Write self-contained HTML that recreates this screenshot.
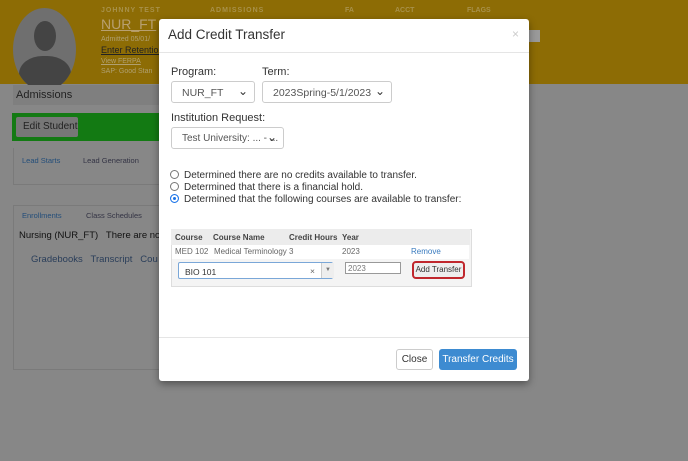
<html><head><style>
body{margin:0;width:688px;height:461px;background:#878787;font-family:"Liberation Sans",sans-serif;position:relative;overflow:hidden}
.a{position:absolute}
.hdr{left:0;top:0;width:688px;height:84px;background:#8d6c05}
.sel{position:absolute;border:1px solid #ccc;border-radius:3px;background:#fff;font-size:10.5px;color:#555;box-sizing:border-box;padding:5px 0 0 10px;white-space:nowrap;overflow:hidden}
.sel:after{content:"⌄";position:absolute;right:6px;top:2px;font-size:12px;color:#333}
.lbl{position:absolute;font-size:11px;color:#333}
.rad{position:absolute;font-size:10px;color:#333;left:170px}
.rad i{display:inline-block;width:7px;height:7px;border:1px solid #777;border-radius:50%;margin-right:5px;vertical-align:-1px}
</style></head><body>
<div class="a hdr"></div>
<div class="a" style="left:13px;top:8px;width:63px;height:83px;border-radius:50%;background:#6f6f6f;overflow:hidden">
<div style="position:absolute;left:21px;top:13px;width:22px;height:30px;border-radius:50%;background:#444"></div>
<div style="position:absolute;left:6px;top:48px;width:52px;height:40px;border-radius:45% 45% 0 0;background:#444"></div></div>
<div class="a" style="left:101px;top:7px;font-size:7px;color:#a8914a;font-weight:bold;letter-spacing:1px">JOHNNY TEST</div>
<div class="a" style="left:210px;top:7px;font-size:7px;color:#a8914a;font-weight:bold;letter-spacing:1px">ADMISSIONS</div>
<div class="a" style="left:345px;top:7px;font-size:7px;color:#a8914a;font-weight:bold">FA</div>
<div class="a" style="left:395px;top:7px;font-size:7px;color:#a8914a;font-weight:bold">ACCT</div>
<div class="a" style="left:467px;top:7px;font-size:7px;color:#a8914a;font-weight:bold">FLAGS</div>
<div class="a" style="left:101px;top:16px;font-size:14px;color:#b8a070;text-decoration:underline">NUR_FT</div>
<div class="a" style="left:101px;top:36px;font-size:7px;color:#b0a070">Admitted 05/01/</div>
<div class="a" style="left:101px;top:45px;font-size:9px;color:#222;text-decoration:underline">Enter Retention</div>
<div class="a" style="left:101px;top:58px;font-size:7px;color:#b0a070;text-decoration:underline">View FERPA</div>
<div class="a" style="left:101px;top:68px;font-size:7px;color:#b0a070">SAP: Good Stan</div>
<div class="a" style="left:528px;top:30px;width:12px;height:12px;background:#9a9a9a"></div>
<div class="a" style="left:13px;top:85px;width:146px;height:20px;background:#7f7f7f;font-size:11px;color:#222;padding:4px 0 0 3px;box-sizing:border-box">Admissions</div>
<div class="a" style="left:12px;top:113px;width:147px;height:28px;background:#137a13"></div>
<div class="a" style="left:16px;top:117px;width:62px;height:20px;background:#777;border-radius:2px;font-size:10px;color:#222;padding:4px 0 0 7px;box-sizing:border-box">Edit Student</div>
<div class="a" style="left:13px;top:148px;width:146px;height:36px;border:1px solid #7a7a7a;border-top:none"></div>
<div class="a" style="left:22px;top:156px;font-size:7.5px;color:#234e7a">Lead Starts</div>
<div class="a" style="left:83px;top:156px;font-size:7.5px;color:#334">Lead Generation</div>
<div class="a" style="left:13px;top:205px;width:146px;height:163px;border:1px solid #7a7a7a"></div>
<div class="a" style="left:22px;top:211px;font-size:7.5px;color:#234e7a">Enrollments</div>
<div class="a" style="left:86px;top:211px;font-size:7.5px;color:#334">Class Schedules</div>
<div class="a" style="left:19px;top:230px;font-size:9.5px;color:#111">Nursing (NUR_FT)&nbsp;&nbsp; There are no r</div>
<div class="a" style="left:31px;top:254px;font-size:9.5px;color:#2a3e5a">Gradebooks&nbsp;&nbsp; Transcript&nbsp;&nbsp; Cou</div>

<div class="a" style="left:159px;top:19px;width:370px;height:362px;background:#fff;border-radius:3px;box-shadow:0 3px 8px rgba(0,0,0,.4)"></div>
<div class="a" style="left:168px;top:27px;font-size:13.5px;color:#333">Add Credit Transfer</div>
<div class="a" style="left:512px;top:27px;font-size:12px;color:#ccc">×</div>
<div class="a" style="left:159px;top:52px;width:370px;height:1px;background:#e5e5e5"></div>
<div class="lbl" style="left:171px;top:66px">Program:</div>
<div class="lbl" style="left:262px;top:66px">Term:</div>
<div class="sel" style="left:171px;top:81px;width:84px;height:22px">NUR_FT</div>
<div class="sel" style="left:262px;top:81px;width:130px;height:22px">2023Spring-5/1/2023</div>
<div class="lbl" style="left:171px;top:112px">Institution Request:</div>
<div class="sel" style="left:171px;top:127px;width:113px;height:22px;font-size:10px">Test University: ... - ...</div>
<div class="rad" style="top:170px"><i></i>Determined there are no credits available to transfer.</div>
<div class="rad" style="top:182px"><i></i>Determined that there is a financial hold.</div>
<div class="rad" style="top:194px"><i style="background:#1a73e8;border-color:#1a73e8;box-shadow:inset 0 0 0 2px #fff"></i>Determined that the following courses are available to transfer:</div>
<div class="a" style="left:171px;top:229px;width:299px;height:56px;border:1px solid #ddd;background:#f4f4f4"></div>
<div class="a" style="left:171px;top:229px;width:299px;height:16px;background:#ececec"></div>
<div class="a" style="left:175px;top:233px;font-size:8px;font-weight:bold;color:#444">Course</div>
<div class="a" style="left:213px;top:233px;font-size:8px;font-weight:bold;color:#444">Course Name</div>
<div class="a" style="left:289px;top:233px;font-size:8px;font-weight:bold;color:#444">Credit Hours</div>
<div class="a" style="left:342px;top:233px;font-size:8px;font-weight:bold;color:#444">Year</div>
<div class="a" style="left:172px;top:245px;width:297px;height:14px;background:#fff"></div>
<div class="a" style="left:175px;top:247px;font-size:8px;color:#666">MED 102</div>
<div class="a" style="left:214px;top:247px;font-size:8px;color:#666">Medical Terminology</div>
<div class="a" style="left:289px;top:247px;font-size:8px;color:#666">3</div>
<div class="a" style="left:342px;top:247px;font-size:8px;color:#666">2023</div>
<div class="a" style="left:411px;top:247px;font-size:8px;color:#3a7bbf">Remove</div>
<div class="a" style="left:178px;top:262px;width:155px;height:17px;border:1px solid #7aa7d8;border-radius:2px;background:#fff;font-size:8.5px;color:#333;padding:4px 0 0 6px;box-sizing:border-box">BIO 101<span style="position:absolute;left:131px;top:3px;color:#666">×</span><span style="position:absolute;left:142px;top:0;width:12px;height:15px;border-left:1px solid #ccc;background:#eee;font-size:6px;color:#777;text-align:center;line-height:15px">▼</span></div>
<div class="a" style="left:345px;top:262px;width:56px;height:12px;border:1px solid #999;background:#fff;font-size:8px;color:#777;padding-left:2px;box-sizing:border-box;line-height:11px">2023</div>
<div class="a" style="left:412px;top:261px;width:53px;height:18px;border:2px solid #c0272d;border-radius:4px;background:#eee;font-size:8px;color:#333;text-align:center;line-height:14px;box-sizing:border-box">Add Transfer</div>
<div class="a" style="left:159px;top:337px;width:370px;height:1px;background:#e5e5e5"></div>
<div class="a" style="left:396px;top:349px;width:37px;height:21px;border:1px solid #ccc;border-radius:3px;font-size:10px;color:#333;text-align:center;line-height:20px;box-sizing:border-box">Close</div>
<div class="a" style="left:439px;top:349px;width:78px;height:21px;background:#3d8bd1;border-radius:3px;font-size:10px;color:#fff;text-align:center;line-height:21px">Transfer Credits</div>
</body></html>
